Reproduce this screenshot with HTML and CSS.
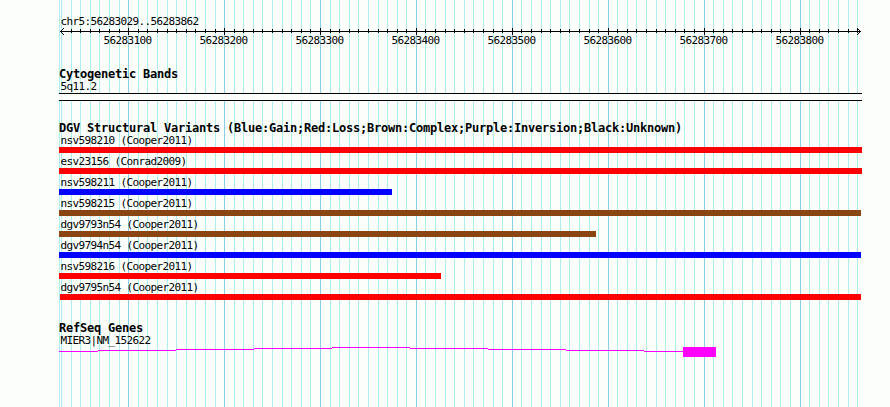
FILE: index.html
```
<!DOCTYPE html>
<html lang="en">
<head>
<meta charset="utf-8">
<title>chr5:56283029..56283862</title>
<link rel="stylesheet" href="styles.css">
</head>
<body>
<svg class="grid" width="890" height="407" aria-hidden="true"><path id="minor" class="minor"/><path id="major" class="major"/></svg>
<main class="browser">
  <header class="overview">
    <div class="label">chr5:56283029..56283862</div>
    <svg class="ruler" width="803" height="8" viewBox="59 27 803 8"><path id="ticks" class="ink"/></svg>
    <div class="scale"><span>56283100</span><span>56283200</span><span>56283300</span><span>56283400</span><span>56283500</span><span>56283600</span><span>56283700</span><span>56283800</span></div>
  </header>
  <section class="track bands">
    <h2>Cytogenetic Bands</h2>
    <div class="label">5q11.2</div>
    <div class="band"></div>
  </section>
  <section class="track variants">
    <h2>DGV Structural Variants (Blue:Gain;Red:Loss;Brown:Complex;Purple:Inversion;Black:Unknown)</h2>
    <div class="variant"><div class="label">nsv598210 (Cooper2011)</div><div class="bar loss" style="width:803px"></div></div>
    <div class="variant"><div class="label">esv23156 (Conrad2009)</div><div class="bar loss" style="width:803px"></div></div>
    <div class="variant"><div class="label">nsv598211 (Cooper2011)</div><div class="bar gain" style="width:333px"></div></div>
    <div class="variant"><div class="label">nsv598215 (Cooper2011)</div><div class="bar complex" style="width:802px"></div></div>
    <div class="variant"><div class="label">dgv9793n54 (Cooper2011)</div><div class="bar complex" style="width:537px"></div></div>
    <div class="variant"><div class="label">dgv9794n54 (Cooper2011)</div><div class="bar gain" style="width:802px"></div></div>
    <div class="variant"><div class="label">nsv598216 (Cooper2011)</div><div class="bar loss" style="width:382px"></div></div>
    <div class="variant"><div class="label">dgv9795n54 (Cooper2011)</div><div class="bar loss" style="width:801px;margin-left:1px"></div></div>
  </section>
  <section class="track genes">
    <h2>RefSeq Genes</h2>
    <div class="label">MIER3|NM_152622</div>
    <svg class="gene" width="803" height="12" viewBox="59 346 803 12"><path class="intron" d="M59 351.5H98M98 350.5H176M176 349.5H254M254 348.5H332M332 347.5H410M410 348.5H488M488 349.5H566M566 350.5H644M644 351.5H683"/><path class="exon" d="M683 347h33v10h-33z"/></svg>
  </section>
</main>
<script src="grid.js"></script>
</body>
</html>
```
FILE: styles.css
```
body {
  margin: 0;
  width: 890px;
  height: 407px;
  overflow: hidden;
  background: #fcfefc;
  color: #000;
  font: 11px/12px "DejaVu Sans Mono", monospace;
  letter-spacing: -0.62px;
}
svg { display: block; shape-rendering: crispEdges; }
.grid { position: absolute; left: 0; top: 0; z-index: -1; }
.minor, .major, .ink, .intron { fill: none; stroke-width: 1; }
.minor { stroke: #afeeee; }
.major { stroke: #87ceeb; }
.ink { stroke: #000; }
.intron { stroke: #f0f; }
.exon { fill: #f0f; }
.browser {
  box-sizing: border-box;
  display: flex;
  flex-direction: column;
  width: 862px;
  padding: 15px 0 0 59px;
}
.label { height: 12px; padding-left: 1.5px; line-height: 14px; white-space: pre; }
.scale {
  display: grid;
  grid-template-columns: repeat(8, 96px);
  padding-left: 44.5px;
  height: 12px;
}
h2 {
  height: 12px;
  margin: 0;
  font-size: 12px;
  line-height: 12px;
  font-weight: bold;
  letter-spacing: -0.225px;
  white-space: nowrap;
}
.bands { margin-top: 21px; }
.band { height: 6px; margin-top: 1px; border: solid #000; border-width: 1px 0; background: #fcfefc; }
.variants { margin-top: 21px; }
.variant { height: 21px; }
.bar { height: 6px; margin-top: 1px; }
.loss { background: #f00; }
.gain { background: #00f; }
.complex { background: #8b4513; }
.genes { margin-top: 20px; }
```
FILE: grid.js
```
// Pixel columns of the 10 bp marks; every 100 bp mark is a major line.
const marks = [61,71,80,90,99,109,119,128,138,147,157,167,176,186,195,205,215,224,
  234,243,253,262,272,282,291,301,310,320,330,339,349,358,368,378,387,397,406,416,
  425,435,445,454,464,473,483,493,502,512,521,531,541,550,560,569,579,589,598,608,
  617,627,636,646,656,665,675,684,694,704,713,723,732,742,752,761,771,780,790,800,
  809,819,828,838,848,857];
const isMajor = x => (x - 128) % 96 === 0;
const line = (x, top, bottom) => `M${x + 0.5} ${top}V${bottom}`;
const draw = (id, d) => document.getElementById(id).setAttribute("d", d);

draw("minor", line(59, 0, 407) + marks.filter(x => !isMajor(x)).map(x => line(x, 0, 407)).join(""));
draw("major", marks.filter(isMajor).map(x => line(x, 0, 407)).join(""));
draw("ticks", "M60 31.5H861M63.5 28v1M62.5 29v1M61.5 30v1M61.5 32v1M62.5 33v1M63.5 34v1"
  + "M857.5 28v1M858.5 29v1M859.5 30v1M859.5 32v1M858.5 33v1M857.5 34v1"
  + marks.slice(1).map(x => isMajor(x) ? line(x, 28, 35) : line(x, 29, 33)).join(""));
```
